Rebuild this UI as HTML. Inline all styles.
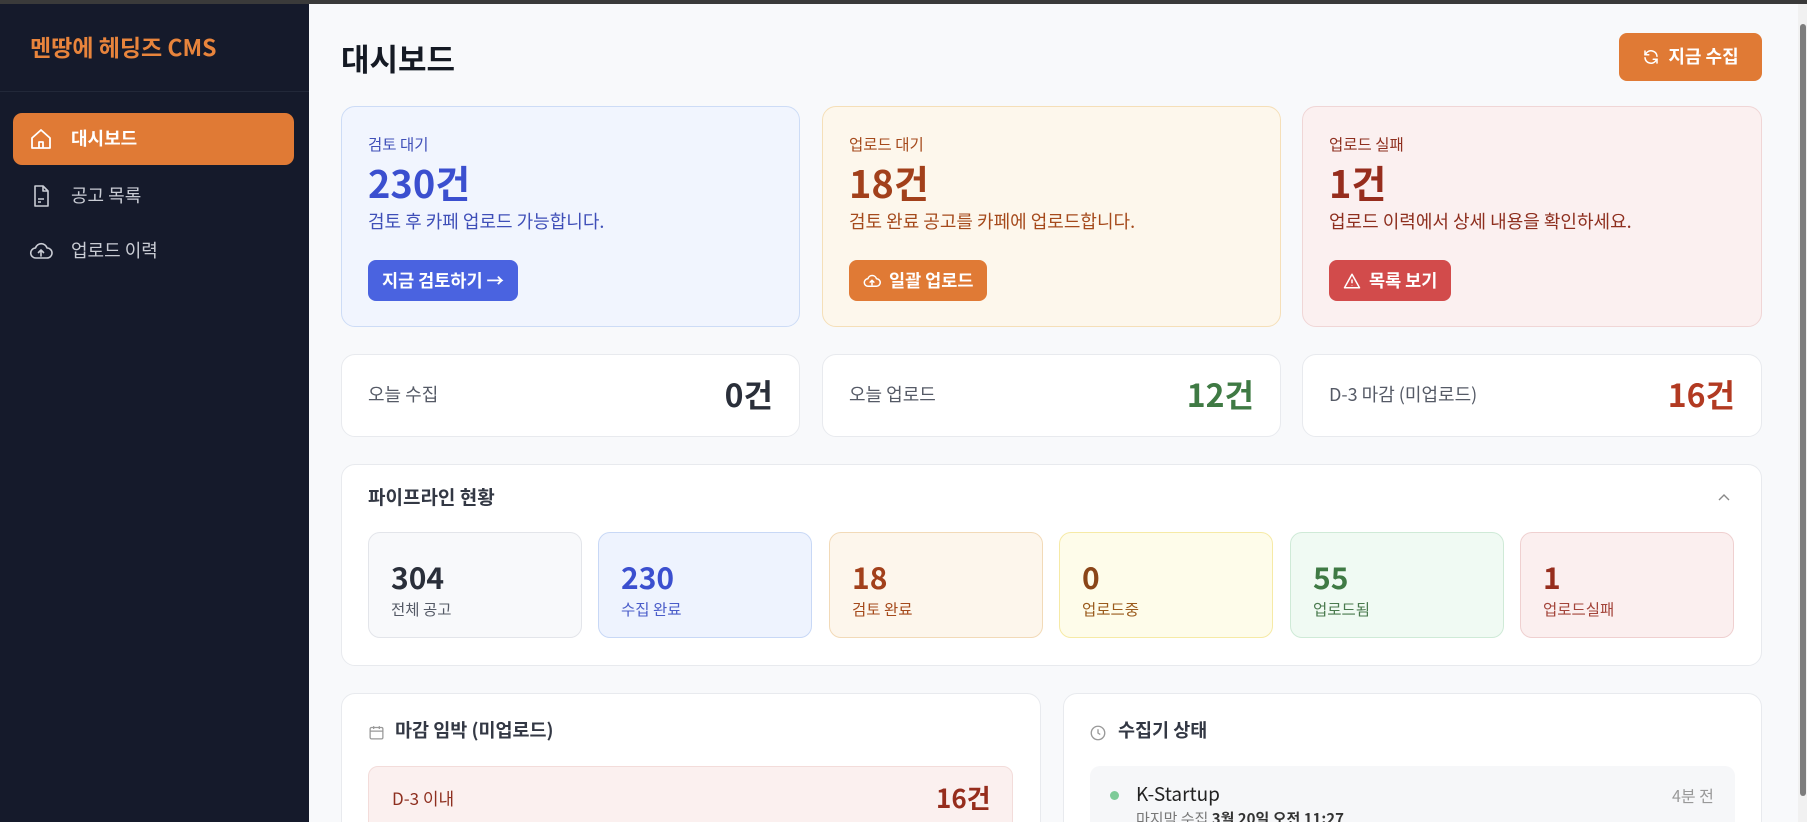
<!DOCTYPE html>
<html><head><meta charset="utf-8">
<style>
*{box-sizing:border-box;margin:0;padding:0}
html,body{width:1807px;height:822px;overflow:hidden}
body{background:#f8f9fb;font-family:"Noto Sans CJK KR","Liberation Sans",sans-serif;position:relative;color:#1f2430;line-height:1.2}
.abs{position:absolute}
#wrap{position:absolute;left:0;top:0;width:1807px;height:822px;overflow:hidden}
.topbar{left:0;top:0;width:1807px;height:4px;background:#3a3a3a;z-index:5}
.side{left:0;top:0;width:309px;height:822px;background:#151a2b}
.logo{left:30px;top:33px;font-size:23px;font-weight:700;color:#e8843c}
.sdiv{left:0;top:91px;width:309px;height:1px;background:#222839}
.nav{left:13px;width:281px;height:52px;border-radius:9px;display:flex;align-items:center;padding-left:16px;font-size:18px;color:#c9ccd4}
.nav svg{margin-right:18px}
.nav.act{background:#e07a35;color:#fff;font-weight:700}
.title{left:341px;top:39px;font-size:31px;font-weight:700;color:#151a24}
.btn{display:inline-flex;align-items:center;gap:8px;border-radius:8px;color:#fff;font-weight:700;font-size:17.5px}
.card{border-radius:14px;border:1px solid #e8eaee;background:#fff}
.big .lab{position:absolute;left:26px;top:28px;font-size:15.5px}
.big .num{position:absolute;left:26px;top:52px;font-size:38px;font-weight:700}
.big .desc{position:absolute;left:26px;top:104px;font-size:18px}
.big .btn{position:absolute;left:26px;top:153px;height:41px;padding:0 14px}
.sm{height:83px}
.sm .l{position:absolute;left:26px;top:29px;font-size:18px;color:#555a66}
.sm .n{position:absolute;right:26px;top:20px;font-size:32px;font-weight:700}
.pb{top:532px;width:214px;height:106px;border-radius:12px;border:1px solid}
.pb .n{position:absolute;left:22px;top:25px;font-size:30px;font-weight:700}
.pb .l{position:absolute;left:22px;top:67px;font-size:15.5px}
</style></head><body><div id="wrap">
<div class="abs topbar"></div>
<div class="abs side"></div>
<div class="abs logo">멘땅에 헤딩즈 CMS</div>
<div class="abs sdiv"></div>
<div class="abs nav act" style="top:113px"><svg width="24" height="24" viewBox="0 0 24 24" fill="none" stroke="#fff" stroke-width="1.8" stroke-linejoin="round"><path d="M3 11 12 3l9 8v10H3z"/><path d="M10 21v-6h4v6"/></svg>대시보드</div>
<div class="abs nav" style="top:170px"><svg width="24" height="24" viewBox="0 0 24 24" fill="none" stroke="#c9ccd4" stroke-width="1.6" stroke-linejoin="round"><path d="M6 2h8l5 5v15H6z"/><path d="M14 2v5h5M9 15h6M9 18h3"/></svg>공고 목록</div>
<div class="abs nav" style="top:225px"><svg width="24" height="24" viewBox="0 0 24 24" fill="none" stroke="#c9ccd4" stroke-width="1.6" stroke-linecap="round" stroke-linejoin="round"><path d="M7 19a5 5 0 0 1-.5-10A6 6 0 0 1 18 9a4.5 4.5 0 0 1 0 10z"/><path d="M12 17v-6M9.5 13.5 12 11l2.5 2.5"/></svg>업로드 이력</div>

<div class="abs title">대시보드</div>
<div class="abs btn" style="left:1619px;top:33px;width:143px;height:48px;background:#e07a35;justify-content:center;font-size:18px"><svg width="18" height="18" viewBox="0 0 24 24" fill="none" stroke="#fff" stroke-width="2" stroke-linecap="round"><path d="M20 11a8 8 0 0 0-14-4.5L4 9M4 13a8 8 0 0 0 14 4.5L20 15"/><path d="M4 4v5h5M20 20v-5h-5"/></svg>지금 수집</div>

<div class="abs card big" style="left:341px;top:106px;width:459px;height:221px;background:#f1f5fe;border-color:#cddcf6">
<div class="lab" style="color:#3f4fb8">검토 대기</div><div class="num" style="color:#3b4fcf">230건</div><div class="desc" style="color:#3f4fb8">검토 후 카페 업로드 가능합니다.</div>
<div class="btn" style="background:#4a63e0">지금 검토하기 →</div></div>
<div class="abs card big" style="left:822px;top:106px;width:459px;height:221px;background:#fdf7ec;border-color:#f5dfb8">
<div class="lab" style="color:#a54a1c">업로드 대기</div><div class="num" style="color:#a2401b">18건</div><div class="desc" style="color:#a54a1c">검토 완료 공고를 카페에 업로드합니다.</div>
<div class="btn" style="background:#e07a35"><svg width="18" height="18" viewBox="0 0 24 24" fill="none" stroke="#fff" stroke-width="2" stroke-linecap="round" stroke-linejoin="round"><path d="M7 19a5 5 0 0 1-.5-10A6 6 0 0 1 18 9a4.5 4.5 0 0 1 0 10z"/><path d="M12 17v-6M9.5 13.5 12 11l2.5 2.5"/></svg>일괄 업로드</div></div>
<div class="abs card big" style="left:1302px;top:106px;width:460px;height:221px;background:#fbf0f0;border-color:#f0d6d6">
<div class="lab" style="color:#8e2f1f">업로드 실패</div><div class="num" style="color:#962d1d">1건</div><div class="desc" style="color:#8e2f1f">업로드 이력에서 상세 내용을 확인하세요.</div>
<div class="btn" style="background:#d24b4b"><svg width="18" height="18" viewBox="0 0 24 24" fill="none" stroke="#fff" stroke-width="2" stroke-linejoin="round"><path d="M12 3 2 21h20z"/><path d="M12 10v5M12 17.5v.5"/></svg>목록 보기</div></div>

<div class="abs card sm" style="left:341px;top:354px;width:459px"><div class="l">오늘 수집</div><div class="n" style="color:#2a2f3a">0건</div></div>
<div class="abs card sm" style="left:822px;top:354px;width:459px"><div class="l">오늘 업로드</div><div class="n" style="color:#3f7a44">12건</div></div>
<div class="abs card sm" style="left:1302px;top:354px;width:460px"><div class="l">D-3 마감 (미업로드)</div><div class="n" style="color:#b23a22">16건</div></div>

<div class="abs card" style="left:341px;top:464px;width:1421px;height:202px"></div>
<div class="abs" style="left:368px;top:486px;font-size:19px;font-weight:700;color:#333844">파이프라인 현황</div>
<svg class="abs" style="left:1716px;top:490px" width="16" height="16" viewBox="0 0 16 16" fill="none" stroke="#888" stroke-width="1.4"><path d="M3 10l5-5 5 5"/></svg>
<div class="abs pb" style="left:368px;background:#f8f9fb;border-color:#e3e5ea"><div class="n" style="color:#2a2f3a">304</div><div class="l" style="color:#555a66">전체 공고</div></div>
<div class="abs pb" style="left:598px;background:#eef3fe;border-color:#c8d8f6"><div class="n" style="color:#3b4fcf">230</div><div class="l" style="color:#4a5cc9">수집 완료</div></div>
<div class="abs pb" style="left:829px;background:#fdf6ec;border-color:#f2dab8"><div class="n" style="color:#a2401b">18</div><div class="l" style="color:#a54a1c">검토 완료</div></div>
<div class="abs pb" style="left:1059px;background:#fefcea;border-color:#f6eaa6"><div class="n" style="color:#8a4518">0</div><div class="l" style="color:#9a5a1c">업로드중</div></div>
<div class="abs pb" style="left:1290px;background:#f0faf3;border-color:#cfead7"><div class="n" style="color:#3f7a44">55</div><div class="l" style="color:#4a7a4e">업로드됨</div></div>
<div class="abs pb" style="left:1520px;background:#fbefef;border-color:#efd0d0"><div class="n" style="color:#962d1d">1</div><div class="l" style="color:#a3443a">업로드실패</div></div>

<div class="abs card" style="left:341px;top:693px;width:700px;height:160px"></div>
<svg class="abs" style="left:368px;top:724px" width="17" height="17" viewBox="0 0 24 24" fill="none" stroke="#999" stroke-width="1.8"><rect x="3" y="5" width="18" height="16" rx="2"/><path d="M3 10h18M8 3v4M16 3v4"/></svg>
<div class="abs" style="left:395px;top:719px;font-size:18.5px;font-weight:700;color:#333844">마감 임박 (미업로드)</div>
<div class="abs" style="left:368px;top:766px;width:645px;height:80px;background:#fbf0ef;border:1px solid #f3dcda;border-radius:10px"></div>
<div class="abs" style="left:392px;top:788px;font-size:17px;color:#8e2f1f">D-3 이내</div>
<div class="abs" style="left:936px;top:782px;font-size:26px;font-weight:700;color:#962d1d">16건</div>

<div class="abs card" style="left:1063px;top:693px;width:699px;height:160px"></div>
<svg class="abs" style="left:1089px;top:724px" width="18" height="18" viewBox="0 0 24 24" fill="none" stroke="#999" stroke-width="1.8"><circle cx="12" cy="12" r="9"/><path d="M12 7v5l3 2"/></svg>
<div class="abs" style="left:1118px;top:719px;font-size:18.5px;font-weight:700;color:#333844">수집기 상태</div>
<div class="abs" style="left:1090px;top:766px;width:645px;height:80px;background:#f6f7f9;border-radius:10px"></div>
<div class="abs" style="left:1110px;top:791px;width:9px;height:9px;border-radius:50%;background:#7ecb98"></div>
<div class="abs" style="left:1136px;top:783px;font-size:19px;color:#222">K-Startup</div>
<div class="abs" style="left:1672px;top:786px;font-size:16px;color:#999">4분 전</div>
<div class="abs" style="left:1136px;top:810px;font-size:15px;color:#777">마지막 수집 <b style="color:#333">3월 20일 오전 11:27</b></div>

<div class="abs" style="left:1798px;top:4px;width:9px;height:818px;background:#f1f1f1"></div>
<div class="abs" style="left:1800px;top:24px;width:6px;height:772px;border-radius:3px;background:#7d7d7d"></div>
</div></body></html>
